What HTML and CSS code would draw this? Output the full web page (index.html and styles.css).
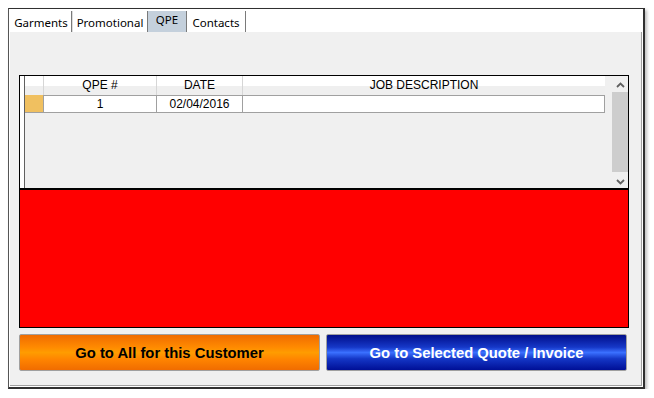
FILE: index.html
```html
<!DOCTYPE html>
<html lang="en">
<head>
    <meta charset="UTF-8">
    <meta name="viewport" content="width=device-width, initial-scale=1.0">
    <title>Customer QPE</title>
    <link rel="stylesheet" href="styles.css">
</head>
<body>
    <div class="window">
        <div class="tabs">
            <div class="tab tab-garments">Garments</div>
            <div class="tab tab-promo">Promotional</div>
            <div class="tab tab-qpe tab-active">QPE</div>
            <div class="tab tab-contacts">Contacts</div>
        </div>
        <section class="panel">
            <div class="grid">
                <div class="grid-edge"></div>
                <div class="grid-body">
                    <div class="grid-row grid-head">
                        <div class="row-head"></div>
                        <div class="cell col-num">QPE #</div>
                        <div class="cell col-date">DATE</div>
                        <div class="cell col-desc">JOB DESCRIPTION</div>
                    </div>
                    <div class="grid-row grid-data">
                        <div class="row-head row-current"></div>
                        <div class="cell col-num">1</div>
                        <div class="cell col-date">02/04/2016</div>
                        <div class="cell col-desc"></div>
                    </div>
                </div>
                <div class="scrollbar">
                    <div class="scroll-arrow scroll-up">
                        <svg width="9" height="6" viewBox="0 0 9 6"><polyline points="1,5 4.5,1.5 8,5" fill="none" stroke="#606060" stroke-width="1.8"/></svg>
                    </div>
                    <div class="scroll-thumb"></div>
                    <div class="scroll-arrow scroll-down">
                        <svg width="9" height="6" viewBox="0 0 9 6"><polyline points="1,1 4.5,4.5 8,1" fill="none" stroke="#606060" stroke-width="1.8"/></svg>
                    </div>
                </div>
            </div>
            <div class="red-box"></div>
            <div class="buttons">
                <button class="btn btn-orange" type="button">Go to All for this Customer</button>
                <button class="btn btn-blue" type="button">Go to Selected Quote / Invoice</button>
            </div>
        </section>
    </div>
</body>
</html>
```

FILE: styles.css
```css
* {
    margin: 0;
    padding: 0;
    box-sizing: border-box;
}
body {
    background-color: #ffffff;
    font-family: "Liberation Sans", Arial, sans-serif;
    font-size: 12px;
}
.window {
    margin: 8px 0 0 8px;
    width: 637px;
    height: 381px;
    background-color: #ffffff;
    border: solid 1px #303030;
    border-left-color: #555555;
    border-right-width: 2px;
    border-bottom-width: 2px;
    box-shadow: 2px 2px 3px rgba(0, 0, 0, 0.25);
}
.tabs {
    display: flex;
    height: 23px;
    padding: 2px 0 0 2px;
}
.tab {
    height: 21px;
    padding-top: 3px;
    text-align: center;
    font-family: "Noto Sans", Tahoma, sans-serif;
    font-size: 11.5px;
    line-height: 17px;
    color: #000;
    border-right: solid 1px #7a7a7a;
}
.tab-garments {
    width: 61px;
    margin-right: 1px;
    box-shadow: 1px 0 0 #dcdcdc;
}
.tab-promo {
    width: 75px;
}
.tab-qpe {
    width: 39px;
}
.tab-contacts {
    width: 59px;
}
.tab-active {
    background-color: #c4d0dc;
    padding-top: 0;
}
.panel {
    margin-left: 1px;
    width: 632px;
    height: 354px;
    background-color: #f0f0f0;
    border-right: solid 1px #a0a0a0;
    border-bottom: solid 1px #a0a0a0;
    padding: 43px 0 0 9px;
}
.grid {
    display: flex;
    width: 610px;
    height: 114px;
    border: solid 1px #000;
    background-color: #f0f0f0;
}
.grid-edge {
    width: 5px;
    background-color: #ffffff;
    border-right: solid 1px #606060;
}
.grid-body {
    width: 580px;
}
.grid-row {
    display: flex;
}
.grid-head {
    height: 19px;
    background: linear-gradient(#ffffff 0, #ffffff 10px, #efefef 10px, #efefef 19px);
}
.grid-head .cell {
    padding-top: 2px;
}
.grid-head .col-num {
    border-left: solid 1px #d6d6d6;
    border-right: solid 1px #d6d6d6;
}
.grid-head .col-date {
    border-right: solid 1px #d6d6d6;
}
.row-head {
    width: 18px;
}
.row-current {
    background-color: #f0c060;
    border-bottom: solid 1px #a0a0a0;
}
.cell {
    text-align: center;
    color: #000;
    line-height: 15px;
}
.col-num {
    width: 114px;
}
.col-date {
    width: 86px;
}
.col-desc {
    width: 362px;
}
.grid-data {
    height: 18px;
}
.grid-data .cell {
    background-color: #ffffff;
    border-top: solid 1px #a0a0a0;
    border-bottom: solid 1px #a0a0a0;
    border-right: solid 1px #a0a0a0;
    padding-top: 1px;
}
.grid-data .col-num {
    border-left: solid 1px #a0a0a0;
}
.scrollbar {
    display: flex;
    flex-direction: column;
    width: 16px;
    margin-left: 7px;
}
.scroll-arrow {
    display: flex;
    justify-content: center;
    align-items: center;
    height: 16px;
}
.scroll-up {
    padding-top: 2px;
}
.scroll-down {
    padding-top: 4px;
}
.scroll-thumb {
    flex: 1;
    background-color: #cdcdcd;
}
.red-box {
    width: 610px;
    height: 139px;
    background-color: #ff0000;
    border: solid 1px #000;
}
.buttons {
    display: flex;
    gap: 6px;
    margin-top: 6px;
}
.btn {
    width: 301px;
    height: 37px;
    border: solid 1px #a0a0a0;
    border-radius: 2px;
    font-family: "Liberation Sans", Arial, sans-serif;
    font-weight: bold;
    font-size: 14.8px;
    text-align: center;
}
.btn-orange {
    color: #000;
    background: linear-gradient(#f06c00 0%, #ff8a00 35%, #ff9c00 50%, #ff8400 70%, #f06c00 100%);
}
.btn-blue {
    color: #fff;
    background: linear-gradient(#000e8a 0%, #1638c8 35%, #3a70ff 50%, #1436c6 68%, #000f96 100%);
}
```
